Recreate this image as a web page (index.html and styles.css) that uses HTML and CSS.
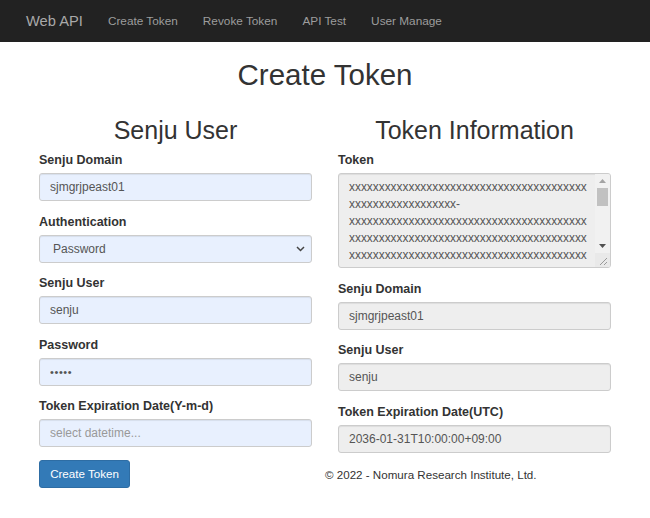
FILE: index.html
```html
<!DOCTYPE html>
<html lang="en">
<head>
<meta charset="utf-8">
<title>Create Token - Web API</title>
<link rel="stylesheet" href="styles.css">
</head>
<body>
<nav class="navbar">
  <a class="brand" href="#">Web API</a>
  <a class="nav-link" href="#">Create Token</a>
  <a class="nav-link" href="#">Revoke Token</a>
  <a class="nav-link" href="#">API Test</a>
  <a class="nav-link" href="#">User Manage</a>
</nav>
<main class="container">
  <h1 class="page-title">Create Token</h1>
  <div class="row">
    <section class="col">
      <h2 class="col-title">Senju User</h2>
      <div class="form-group">
        <label class="label">Senju Domain</label>
        <input class="input autofill" type="text" value="sjmgrjpeast01">
      </div>
      <div class="form-group">
        <label class="label">Authentication</label>
        <div class="select-wrap autofill">
          <select class="select"><option>Password</option></select>
          <svg class="chevron" width="9" height="6" viewBox="0 0 9 6"><path d="M1 1l3.5 3.5L8 1" fill="none" stroke="#444" stroke-width="1.5"/></svg>
        </div>
      </div>
      <div class="form-group">
        <label class="label">Senju User</label>
        <input class="input autofill" type="text" value="senju">
      </div>
      <div class="form-group">
        <label class="label">Password</label>
        <input class="input autofill dots" type="text" value="•••••">
      </div>
      <div class="form-group">
        <label class="label">Token Expiration Date(Y-m-d)</label>
        <input class="input autofill" type="text" placeholder="select datetime...">
      </div>
      <button class="btn" type="button">Create Token</button>
    </section>
    <section class="col">
      <h2 class="col-title">Token Information</h2>
      <div class="form-group">
        <label class="label">Token</label>
        <div class="tokenbox">
          <div class="tokentext">xxxxxxxxxxxxxxxxxxxxxxxxxxxxxxxxxxxxxxxx<br>xxxxxxxxxxxxxxxxxx-<br>xxxxxxxxxxxxxxxxxxxxxxxxxxxxxxxxxxxxxxxx<br>xxxxxxxxxxxxxxxxxxxxxxxxxxxxxxxxxxxxxxxx<br>xxxxxxxxxxxxxxxxxxxxxxxxxxxxxxxxxxxxxxxx</div>
          <div class="scrollbar">
            <div class="sb-btn"><svg width="7" height="4" viewBox="0 0 7 4"><path d="M0 4L3.5 0L7 4z" fill="#a3a3a3"/></svg></div>
            <div class="sb-track"><div class="sb-thumb"></div></div>
            <div class="sb-btn"><svg width="7" height="4" viewBox="0 0 7 4"><path d="M0 0L7 0L3.5 4z" fill="#505050"/></svg></div>
            <div class="sb-corner"><svg width="14" height="14" viewBox="0 0 14 14"><path d="M12 5L5 12M12 9L9 12" stroke="#9a9a9a" stroke-width="1"/></svg></div>
          </div>
        </div>
      </div>
      <div class="form-group">
        <label class="label">Senju Domain</label>
        <input class="input readonly" type="text" value="sjmgrjpeast01" readonly>
      </div>
      <div class="form-group">
        <label class="label">Senju User</label>
        <input class="input readonly" type="text" value="senju" readonly>
      </div>
      <div class="form-group last">
        <label class="label">Token Expiration Date(UTC)</label>
        <input class="input readonly" type="text" value="2036-01-31T10:00:00+09:00" readonly>
      </div>
      <footer class="footer">© 2022 - Nomura Research Institute, Ltd.</footer>
    </section>
  </div>
</main>
</body>
</html>
```

FILE: styles.css
```css
* { box-sizing: border-box; }
html, body { margin: 0; padding: 0; background: #fff; }
body {
  font-family: "Liberation Sans", Arial, Helvetica, sans-serif;
  color: #333;
  font-size: 11.6px;
}
.navbar {
  height: 42px;
  background: #222;
  display: flex;
  align-items: center;
  gap: 25px;
  padding-left: 26px;
}
.navbar a { text-decoration: none; }
.brand { color: #a9a9a9; font-size: 14.7px; }
.nav-link { color: #9d9d9d; font-size: 11.8px; }
.container { padding: 0 26px; }
.page-title {
  margin: 16.5px 0 0;
  font-size: 29.5px;
  line-height: 1.1;
  font-weight: normal;
  text-align: center;
}
.row { display: flex; margin-top: 26px; }
.col { flex: 1 1 0; padding: 0 13px; }
.col-title {
  margin: 0 0 8px;
  font-size: 25px;
  line-height: 1.1;
  font-weight: normal;
  text-align: center;
}
.form-group { margin-bottom: 12.5px; }
.form-group.last { margin-bottom: 8px; }
.label {
  display: block;
  font-weight: bold;
  font-size: 12.5px;
  line-height: 17px;
  margin-bottom: 4px;
}
.input {
  display: block;
  width: 100%;
  height: 28px;
  padding: 0 10px;
  border: 1px solid #ccc;
  border-radius: 3px;
  font-family: inherit;
  font-size: 12px;
  color: #555;
  box-shadow: inset 0 1px 1px rgba(0,0,0,.075);
  outline: none;
}
.input::placeholder { color: #999; }
.autofill { background: #e8f0fe; }
.readonly { background: #eee; }
.dots { letter-spacing: 0.6px; font-size: 11px; }
.select-wrap {
  display: flex;
  align-items: center;
  height: 28px;
  border: 1px solid #ccc;
  border-radius: 3px;
  box-shadow: inset 0 1px 1px rgba(0,0,0,.075);
  padding-right: 6px;
}
.select {
  flex: 1;
  appearance: none;
  -webkit-appearance: none;
  border: none;
  background: transparent;
  height: 100%;
  padding: 0 0 0 13px;
  font-family: inherit;
  font-size: 12px;
  color: #555;
  outline: none;
}
.chevron { flex: none; }
.tokenbox {
  display: flex;
  height: 95px;
  border: 1px solid #ccc;
  border-radius: 3px;
  background: #eee;
  box-shadow: inset 0 1px 1px rgba(0,0,0,.075);
  overflow: hidden;
}
.tokentext {
  flex: 1;
  padding: 4.5px 0 0 10px;
  font-size: 11.9px;
  line-height: 17px;
  color: #555;
  white-space: nowrap;
  overflow: hidden;
}
.scrollbar {
  width: 15px;
  display: flex;
  flex-direction: column;
  background: #f1f1f1;
}
.sb-btn {
  height: 14px;
  display: flex;
  align-items: center;
  justify-content: center;
}
.sb-track { flex: 1; padding: 0 2px; }
.sb-thumb { height: 18px; background: #c1c1c1; }
.sb-corner { height: 14px; background: #e9e9e9; }
.sb-corner svg { display: block; }
.btn {
  display: block;
  height: 28px;
  width: 91px;
  padding: 0;
  border: 1px solid #2e6da4;
  border-radius: 3px;
  background: #337ab7;
  color: #fff;
  font-family: inherit;
  font-size: 11.6px;
}
.footer {
  margin-left: -13px;
  height: 28px;
  line-height: 28px;
  font-size: 11.6px;
  color: #333;
}
```
